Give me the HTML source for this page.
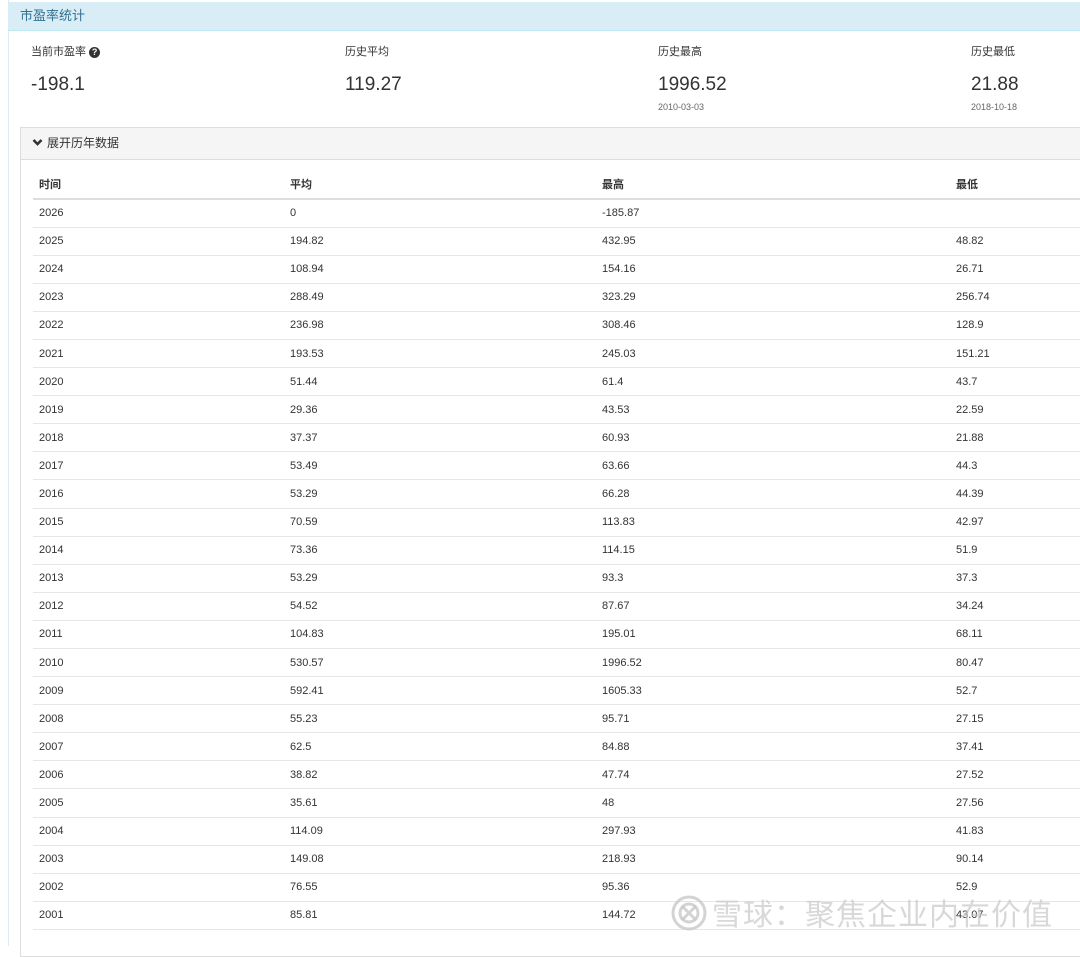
<!DOCTYPE html>
<html><head><meta charset="utf-8"><style>
*{margin:0;padding:0;box-sizing:border-box}
body{width:1080px;height:946px;overflow:hidden;background:#fff;font-family:"Liberation Sans","Noto Sans CJK SC",sans-serif;color:#333;position:relative}
.lb{position:absolute;left:8px;top:0;width:1px;height:946px;background:#d9edf7}
.hd{position:absolute;left:8px;top:2px;width:1072px;height:29px;background:#d9edf7;border-bottom:1px solid #bce8f1;color:#31708f;font-size:13px;line-height:28px;padding-left:12px}
.st{position:absolute;font-size:11px;color:#333}
.sv{position:absolute;font-size:19px;color:#333}
.sd{position:absolute;font-size:9px;color:#666}
.pn{position:absolute;left:20px;top:127px;width:1070px;height:830px;border:1px solid #ddd;border-right:none}
.ph{height:32px;background:#f5f5f5;border-bottom:1px solid #ddd;font-size:12px;line-height:31px;padding-left:11px;color:#333}
table{position:absolute;left:12px;top:42px;width:1050px;border-collapse:collapse;font-size:11px}
th{text-align:left;font-weight:bold;height:29px;border-bottom:2px solid #ddd;padding-left:6px}
td{height:28.1px;border-bottom:1px solid #e6e6e6;padding-left:6px;color:#333}
.wm{position:absolute;left:672px;top:890px;font-size:30px;color:rgba(200,200,200,.7);letter-spacing:1px;font-family:"Noto Sans CJK SC",sans-serif}
</style></head><body>
<div class="lb"></div>
<div class="hd">市盈率统计</div>
<div class="st" style="left:31px;top:43px">当前市盈率 <span style="display:inline-block;width:11px;height:11px;border-radius:50%;background:#333;color:#fff;font-size:9px;line-height:11px;text-align:center;font-weight:bold">?</span></div>
<div class="st" style="left:345px;top:43px">历史平均</div>
<div class="st" style="left:658px;top:43px">历史最高</div>
<div class="st" style="left:971px;top:43px">历史最低</div>
<div class="sv" style="left:31px;top:74px">-198.1</div>
<div class="sv" style="left:345px;top:74px">119.27</div>
<div class="sv" style="left:658px;top:74px">1996.52</div>
<div class="sv" style="left:971px;top:74px">21.88</div>
<div class="sd" style="left:658px;top:102px">2010-03-03</div>
<div class="sd" style="left:971px;top:102px">2018-10-18</div>
<div class="pn"><div class="ph"><svg width="11" height="9" viewBox="0 0 11 9" style="vertical-align:middle;margin-right:4px;margin-top:-2px"><path d="M1.5 2L5.5 6L9.5 2" fill="none" stroke="#333" stroke-width="2.6"/></svg>展开历年数据</div>
<table>
<colgroup><col style="width:251px"><col style="width:312px"><col style="width:354px"><col></colgroup>
<tr><th>时间</th><th>平均</th><th>最高</th><th>最低</th></tr>
<tr><td>2026</td><td>0</td><td>-185.87</td><td></td></tr>
<tr><td>2025</td><td>194.82</td><td>432.95</td><td>48.82</td></tr>
<tr><td>2024</td><td>108.94</td><td>154.16</td><td>26.71</td></tr>
<tr><td>2023</td><td>288.49</td><td>323.29</td><td>256.74</td></tr>
<tr><td>2022</td><td>236.98</td><td>308.46</td><td>128.9</td></tr>
<tr><td>2021</td><td>193.53</td><td>245.03</td><td>151.21</td></tr>
<tr><td>2020</td><td>51.44</td><td>61.4</td><td>43.7</td></tr>
<tr><td>2019</td><td>29.36</td><td>43.53</td><td>22.59</td></tr>
<tr><td>2018</td><td>37.37</td><td>60.93</td><td>21.88</td></tr>
<tr><td>2017</td><td>53.49</td><td>63.66</td><td>44.3</td></tr>
<tr><td>2016</td><td>53.29</td><td>66.28</td><td>44.39</td></tr>
<tr><td>2015</td><td>70.59</td><td>113.83</td><td>42.97</td></tr>
<tr><td>2014</td><td>73.36</td><td>114.15</td><td>51.9</td></tr>
<tr><td>2013</td><td>53.29</td><td>93.3</td><td>37.3</td></tr>
<tr><td>2012</td><td>54.52</td><td>87.67</td><td>34.24</td></tr>
<tr><td>2011</td><td>104.83</td><td>195.01</td><td>68.11</td></tr>
<tr><td>2010</td><td>530.57</td><td>1996.52</td><td>80.47</td></tr>
<tr><td>2009</td><td>592.41</td><td>1605.33</td><td>52.7</td></tr>
<tr><td>2008</td><td>55.23</td><td>95.71</td><td>27.15</td></tr>
<tr><td>2007</td><td>62.5</td><td>84.88</td><td>37.41</td></tr>
<tr><td>2006</td><td>38.82</td><td>47.74</td><td>27.52</td></tr>
<tr><td>2005</td><td>35.61</td><td>48</td><td>27.56</td></tr>
<tr><td>2004</td><td>114.09</td><td>297.93</td><td>41.83</td></tr>
<tr><td>2003</td><td>149.08</td><td>218.93</td><td>90.14</td></tr>
<tr><td>2002</td><td>76.55</td><td>95.36</td><td>52.9</td></tr>
<tr><td>2001</td><td>85.81</td><td>144.72</td><td>43.07</td></tr>
</table></div>
<svg style="position:absolute;left:670px;top:894px" width="38" height="38" viewBox="0 0 38 38"><circle cx="19" cy="19" r="16" fill="none" stroke="rgba(200,200,200,.8)" stroke-width="3"/><circle cx="19" cy="19" r="9" fill="none" stroke="rgba(200,200,200,.8)" stroke-width="3"/><path d="M12 12L26 26M26 12L12 26" stroke="rgba(200,200,200,.8)" stroke-width="3"/></svg>
<div class="wm" style="left:712px">雪球：聚焦企业内在价值</div>
</body></html>
